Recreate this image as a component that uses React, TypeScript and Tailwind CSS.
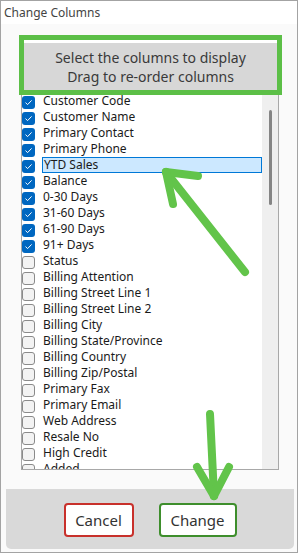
import React from "react";

const items: { label: string; checked: boolean; selected?: boolean }[] = [
  { label: "Customer Code", checked: true },
  { label: "Customer Name", checked: true },
  { label: "Primary Contact", checked: true },
  { label: "Primary Phone", checked: true },
  { label: "YTD Sales", checked: true, selected: true },
  { label: "Balance", checked: true },
  { label: "0-30 Days", checked: true },
  { label: "31-60 Days", checked: true },
  { label: "61-90 Days", checked: true },
  { label: "91+ Days", checked: true },
  { label: "Status", checked: false },
  { label: "Billing Attention", checked: false },
  { label: "Billing Street Line 1", checked: false },
  { label: "Billing Street Line 2", checked: false },
  { label: "Billing City", checked: false },
  { label: "Billing State/Province", checked: false },
  { label: "Billing Country", checked: false },
  { label: "Billing Zip/Postal", checked: false },
  { label: "Primary Fax", checked: false },
  { label: "Primary Email", checked: false },
  { label: "Web Address", checked: false },
  { label: "Resale No", checked: false },
  { label: "High Credit", checked: false },
  { label: "Added", checked: false },
];

function Box({ checked }: { checked: boolean }) {
  if (checked) {
    return (
      <div className="w-[13px] h-[13px] rounded-[3px] bg-[#0067c0] flex items-center justify-center shrink-0">
        <svg width="9" height="9" viewBox="0 0 9 9">
          <path d="M1.5 4.6 L3.6 6.6 L7.6 2.4" stroke="#ffffff" strokeWidth="1" fill="none" />
        </svg>
      </div>
    );
  }
  return <div className="w-[13px] h-[13px] rounded-[3px] bg-[#f3f3f3] border border-[#8a8a8a] shrink-0" />;
}

export default function App() {
  return (
    <div className="relative w-[300px] h-[555px] bg-white" style={{ fontFamily: '"Noto Sans", "Open Sans", sans-serif' }}>
      <div className="w-[298px] h-[553px] border border-[#a3a3a3] bg-[#fafafa] flex flex-col">
        <div className="h-[23px] bg-white pl-[3px] flex items-center text-[12px] text-[#444]">Change Columns</div>
        <div className="ml-[18px] mt-[11px] w-[263px] h-[60px] border-[5px] border-[#5cbf47] bg-white relative z-10 flex flex-col">
          <div className="mt-[3px] flex-1 bg-[#d7d7d7] flex flex-col items-center justify-center text-[14px] leading-[19px] text-[#3a3a3a]">
            <div>Select the columns to display</div>
            <div>Drag to re-order columns</div>
          </div>
        </div>
        <div className="-mt-[2px] ml-[20px] w-[258px] h-[377px] border-l border-r border-b border-[#a8a8a8] bg-white flex overflow-hidden">
          <div className="flex-1 overflow-hidden">
            <div className="flex flex-col">
              {items.map((it) => (
                <div key={it.label} className="h-[16px] flex items-center">
                  <div className="pt-[2px]">
                    <Box checked={it.checked} />
                  </div>
                  <div
                    className={
                      it.selected
                        ? "ml-[7px] flex-1 h-[16px] flex items-center pl-[1px] bg-[#cce8ff] border border-[#0078d7] text-[12px] text-[#1a1a1a]"
                        : "ml-[8px] text-[12px] text-[#1a1a1a]"
                    }
                  >
                    {it.label}
                  </div>
                </div>
              ))}
            </div>
          </div>
          <div className="w-[16px] bg-[#efefef] flex justify-center pt-[17px]">
            <div className="w-[3px] h-[95px] rounded-full bg-[#858585]" />
          </div>
        </div>
        <div className="ml-[5px] mt-[19px] w-[288px] h-[60px] bg-[#d9d9d9] rounded-b-[5px] flex justify-center gap-[25px] pt-[14px]">
          <div className="w-[70px] h-[34px] bg-white border-2 border-[#c8302b] rounded-[4px] flex items-center justify-center text-[15px] text-[#333]">
            Cancel
          </div>
          <div className="w-[78px] h-[34px] bg-white border-2 border-[#3e8e2c] rounded-[4px] flex items-center justify-center text-[15px] text-[#333]">
            Change
          </div>
        </div>
      </div>
      <svg className="absolute left-0 top-0 pointer-events-none z-20" width="300" height="555" viewBox="0 0 300 555">
        <g stroke="#62c44a" strokeWidth="8" strokeLinecap="round" strokeLinejoin="round" fill="none">
          <path d="M245 272 L166 172" />
          <path d="M166 172 L198 176" />
          <path d="M166 172 L173 204" />
          <path d="M210 414 L214 496" />
          <path d="M214 496 L197 467" />
          <path d="M214 496 L229 467" />
        </g>
      </svg>
    </div>
  );
}
